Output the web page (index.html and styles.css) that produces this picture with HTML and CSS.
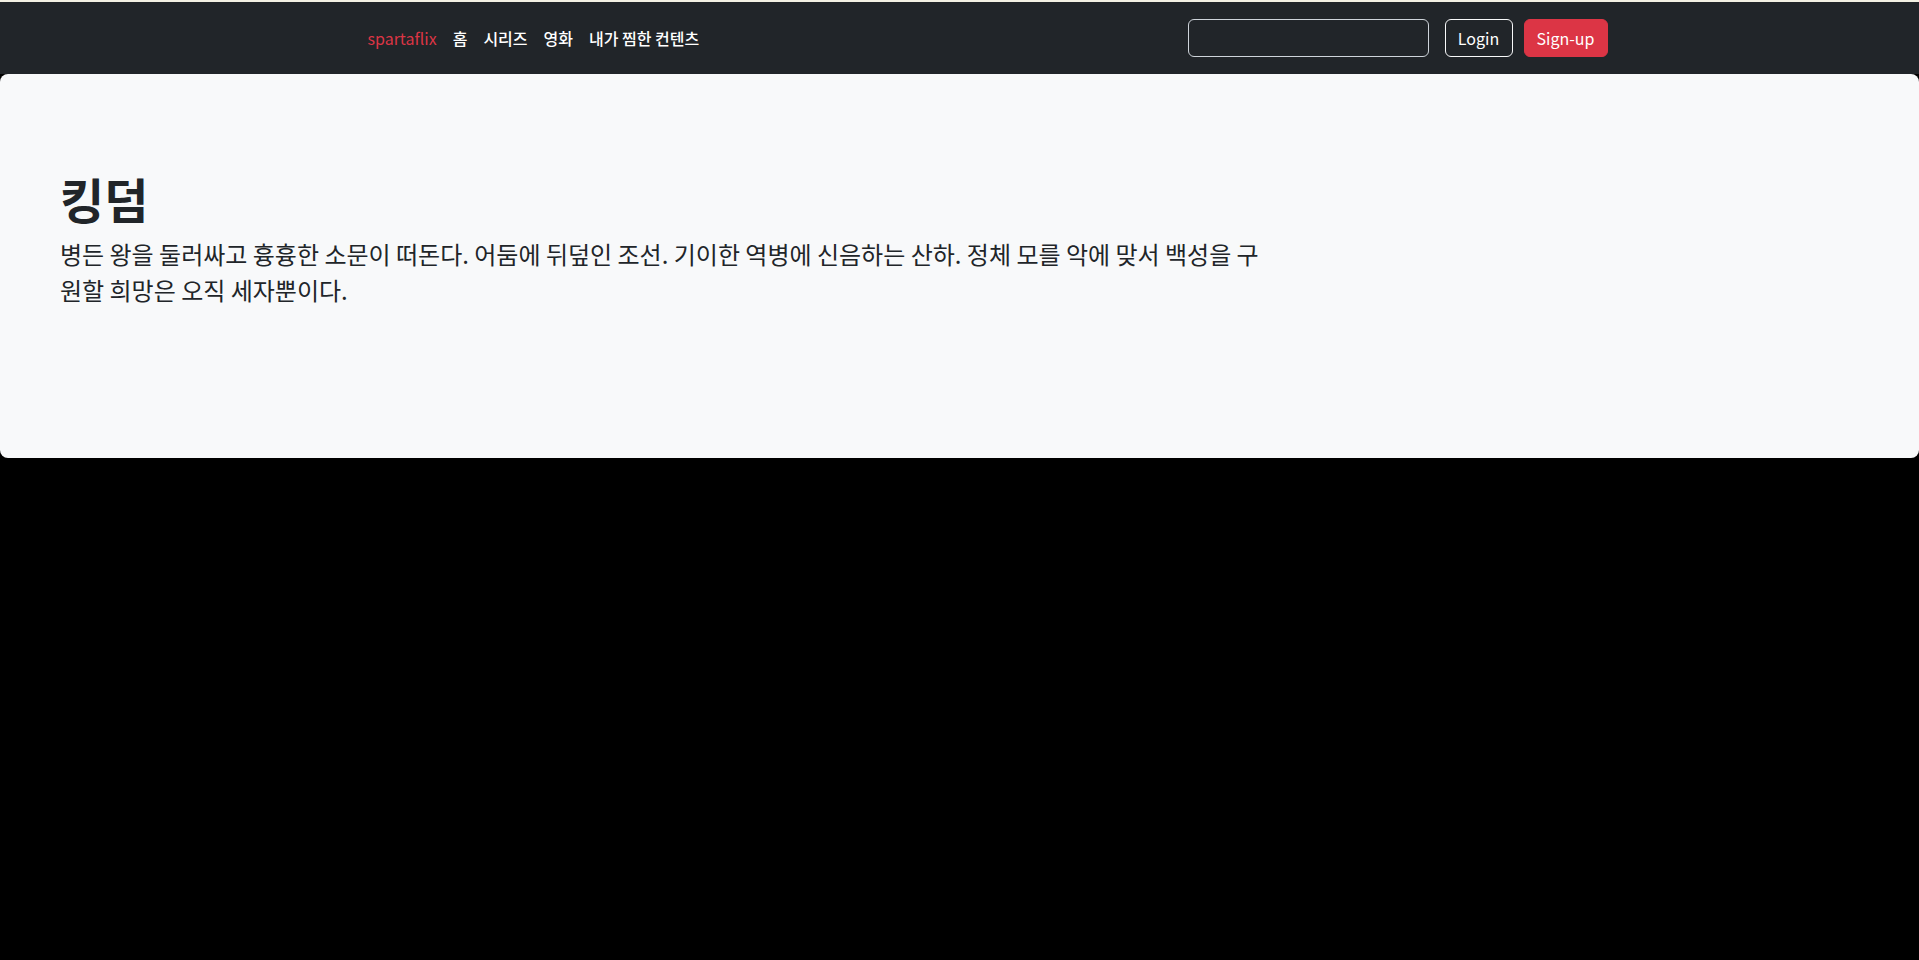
FILE: index.html
```
<!DOCTYPE html>
<html lang="en">
<head>
  <meta charset="UTF-8">
  <meta name="viewport" content="width=device-width, initial-scale=1.0">
  <title>spartaflix</title>
  <link rel="stylesheet" href="styles.css">
</head>

<body>
  <!-- Navbar -->
  <nav class="navbar">
    <div class="nav-container">
      <div class="nav-left">
        <a href="#" class="brand">spartaflix</a>
        <a href="#" class="nav-link">홈</a>
        <a href="#" class="nav-link">시리즈</a>
        <a href="#" class="nav-link">영화</a>
        <a href="#" class="nav-link">내가 찜한 컨텐츠</a>
      </div>
      <form class="nav-right">
        <input type="search" class="search-input">
        <button type="button" class="btn btn-outline">Login</button>
        <button type="button" class="btn btn-danger">Sign-up</button>
      </form>
    </div>
  </nav>

  <!-- Hero -->
  <div class="hero">
    <h1 class="hero-title">킹덤</h1>
    <p class="hero-text">병든 왕을 둘러싸고 흉흉한 소문이 떠돈다. 어둠에 뒤덮인 조선. 기이한 역병에 신음하는 산하. 정체 모를 악에 맞서 백성을 구원할 희망은 오직 세자뿐이다.</p>
  </div>
</body>
</html>
```

FILE: styles.css
```
/* Global Styles */
body {
  margin: 0;
  background-color: #000;
  font-family: "Noto Sans CJK KR", "Noto Sans", sans-serif;
  color: #212529;
}

/* Navbar */
.navbar {
  background-color: #212529;
  border-top: 2px solid #f3f1e3;
  height: 72px;
  display: flex;
  align-items: center;
}
.nav-container {
  width: 1320px;
  margin: 0 auto;
  padding: 0 12px;
  box-sizing: border-box;
  display: flex;
  align-items: center;
  justify-content: space-between;
}
.nav-left {
  display: flex;
  align-items: center;
  gap: 16px;
  margin-left: 56px;
}
.brand {
  color: #dc3545;
  font-size: 16px;
  text-decoration: none;
}
.nav-link {
  color: #fff;
  font-size: 16px;
  font-weight: 500;
  text-decoration: none;
}

.nav-right {
  display: flex;
  align-items: center;
  margin: 0;
}
.search-input {
  width: 241px;
  height: 38px;
  box-sizing: border-box;
  background: transparent;
  border: 1px solid #ced4da;
  border-radius: 6px;
  margin-right: 16px;
  color: #fff;
}

/* Buttons */
.btn {
  height: 38px;
  box-sizing: border-box;
  padding: 0 12px;
  font-family: inherit;
  font-size: 16px;
  border-radius: 6px;
  cursor: pointer;
}
.btn-outline {
  width: 68px;
  color: #fff;
  background: transparent;
  border: 1px solid #f8f9fa;
  margin-right: 11px;
}
.btn-danger {
  width: 84px;
  color: #fff;
  background-color: #dc3545;
  border: 1px solid #dc3545;
}

/* Hero */
.hero {
  height: 384px;
  box-sizing: border-box;
  padding: 96px 60px;
  background-color: #f8f9fa;
  border-radius: 8px;
}
.hero-title {
  margin: 0 0 8px;
  font-size: 48px;
  font-weight: bold;
  line-height: 1.2;
}
.hero-text {
  width: 1199px;
  margin: 0;
  font-size: 24px;
  line-height: 1.5;
  word-break: break-all;
}
```
